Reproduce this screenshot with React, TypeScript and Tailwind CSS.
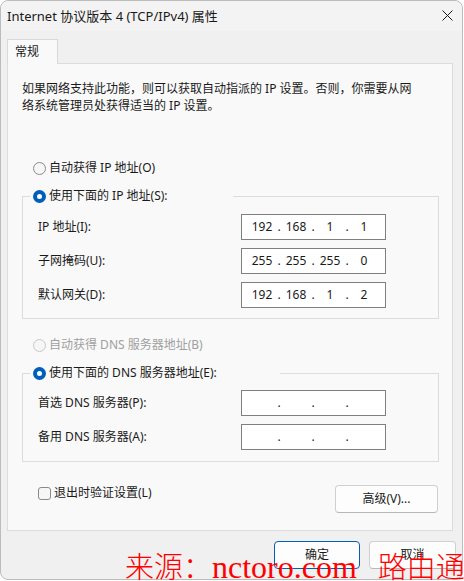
import React from 'react';

const font = { fontFamily: '"Noto Sans", "Noto Sans CJK SC", sans-serif' };

function Radio({ checked, disabled }: { checked?: boolean; disabled?: boolean }) {
  if (checked) {
    return (
      <span className="flex h-[13px] w-[13px] items-center justify-center rounded-full bg-[#005fb8]">
        <span className="h-[5px] w-[5px] rounded-full bg-white" />
      </span>
    );
  }
  return (
    <span
      className={
        'h-[13px] w-[13px] rounded-full border bg-[#f6f6f6] ' +
        (disabled ? 'border-[#c8c8c8]' : 'border-[#8a8a8a]')
      }
    />
  );
}

function IpBox({ parts }: { parts: string[] }) {
  return (
    <div className="flex h-[26px] w-[145px] items-center border border-[#7f7f7f] bg-white pl-[7px] text-[12px] text-[#1a1a1a]">
      {parts.map((p, i) => (
        <React.Fragment key={i}>
          <span className="w-[26px] text-center">{p}</span>
          {i < 3 && <span className="w-[8px] text-center">.</span>}
        </React.Fragment>
      ))}
    </div>
  );
}

function Row({ label, parts }: { label: string; parts: string[] }) {
  return (
    <div className="grid h-[26px] grid-cols-[203px_145px] items-center pl-[15px]">
      <span>{label}</span>
      <IpBox parts={parts} />
    </div>
  );
}

export default function App() {
  return (
    <div className="relative h-[581px] w-[464px] overflow-hidden bg-white text-[12px] text-[#1a1a1a]" style={font}>
      <div className="flex h-[580px] w-[463px] flex-col rounded-lg border border-[#bcbcbc] bg-[#f0f0f0]">
        {/* title bar */}
        <div className="flex h-[30px] items-center justify-between rounded-t-lg bg-[#f3f3f3] pl-[6px] pr-[9px]">
          <span className="text-[13px] leading-none">Internet 协议版本 4 (TCP/IPv4) 属性</span>
          <svg width="11" height="11" viewBox="0 0 11 11" className="mb-[1px]">
            <path d="M0.5 0.5 L10.5 10.5 M10.5 0.5 L0.5 10.5" stroke="#1a1a1a" strokeWidth="1" />
          </svg>
        </div>

        {/* tab */}
        <div className="mt-[8px] flex">
          <div className="relative z-10 -mb-px ml-[6px] h-[25px] w-[51px] border-x border-t border-[#d9d9d9] bg-[#f9f9f9] pl-[7px] pt-[3px]">
            常规
          </div>
        </div>

        {/* panel */}
        <div className="ml-[6px] flex w-[446px] flex-col border border-[#dcdcdc] bg-[#f9f9f9] pb-[17px] pt-[16px]">
          <p className="pl-[14px] leading-[17px]">
            如果网络支持此功能，则可以获取自动指派的 IP 设置。否则，你需要从网
            <br />
            络系统管理员处获得适当的 IP 设置。
          </p>

          <div className="ml-[25px] mt-[46px] flex h-[16px] items-center gap-[3px]">
            <Radio />
            <span>自动获得 IP 地址(O)</span>
          </div>

          <div className="relative ml-[14px] mt-[20px] flex w-[417px] flex-col gap-[8px] border border-[#dcdcdc] pb-[10px] pt-[17px]">
            <div className="absolute -top-[9px] left-[7px] flex h-[16px] w-[203px] items-center gap-[3px] bg-[#f9f9f9] pl-[3px]">
              <Radio checked />
              <span>使用下面的 IP 地址(S):</span>
            </div>
            <Row label="IP 地址(I):" parts={['192', '168', '1', '1']} />
            <Row label="子网掩码(U):" parts={['255', '255', '255', '0']} />
            <Row label="默认网关(D):" parts={['192', '168', '1', '2']} />
          </div>

          <div className="ml-[25px] mt-[18px] flex h-[16px] items-center gap-[3px] text-[#a0a0a0]">
            <Radio disabled />
            <span>自动获得 DNS 服务器地址(B)</span>
          </div>

          <div className="relative ml-[14px] mt-[20px] flex w-[417px] flex-col gap-[8px] border border-[#dcdcdc] pb-[11px] pt-[16px]">
            <div className="absolute -top-[9px] left-[7px] flex h-[16px] w-[250px] items-center gap-[3px] bg-[#f9f9f9] pl-[3px]">
              <Radio checked />
              <span>使用下面的 DNS 服务器地址(E):</span>
            </div>
            <Row label="首选 DNS 服务器(P):" parts={['', '', '', '']} />
            <Row label="备用 DNS 服务器(A):" parts={['', '', '', '']} />
          </div>

          <div className="mt-[23px] flex items-start justify-between pl-[30px] pr-[14px]">
            <div className="flex h-[16px] items-center gap-[3px]">
              <span className="h-[13px] w-[13px] rounded-[3px] border border-[#8a8a8a] bg-[#f6f6f6]" />
              <span>退出时验证设置(L)</span>
            </div>
            <button className="flex h-[28px] w-[103px] items-center justify-center rounded-[4px] border border-[#d0d0d0] border-b-[#b8b8b8] bg-[#fdfdfd]">
              高级(V)...
            </button>
          </div>
        </div>

        {/* dialog buttons */}
        <div className="mt-[10px] flex justify-end gap-[9px] pr-[6px]">
          <button className="flex h-[28px] w-[86px] items-center justify-center rounded-[4px] border border-[#005fb8] bg-[#fdfdfd]">
            确定
          </button>
          <button className="flex h-[28px] w-[87px] items-center justify-center rounded-[4px] border border-[#d0d0d0] border-b-[#b8b8b8] bg-[#fdfdfd]">
            取消
          </button>
        </div>
      </div>

      {/* watermark */}
      <div className="absolute left-[125px] top-[547px] flex items-baseline whitespace-nowrap text-[#ff0000]">
        <span className="text-[29px] font-light leading-[36px]" style={{ fontFamily: '"Noto Sans CJK SC", sans-serif' }}>
          来源：
        </span>
        <span className="text-[32px] leading-[36px]" style={{ fontFamily: '"Liberation Serif", serif' }}>
          nctoro.com
        </span>
        <span className="ml-[21px] text-[29px] font-light leading-[36px]" style={{ fontFamily: '"Noto Sans CJK SC", sans-serif' }}>
          路由通
        </span>
      </div>
    </div>
  );
}
